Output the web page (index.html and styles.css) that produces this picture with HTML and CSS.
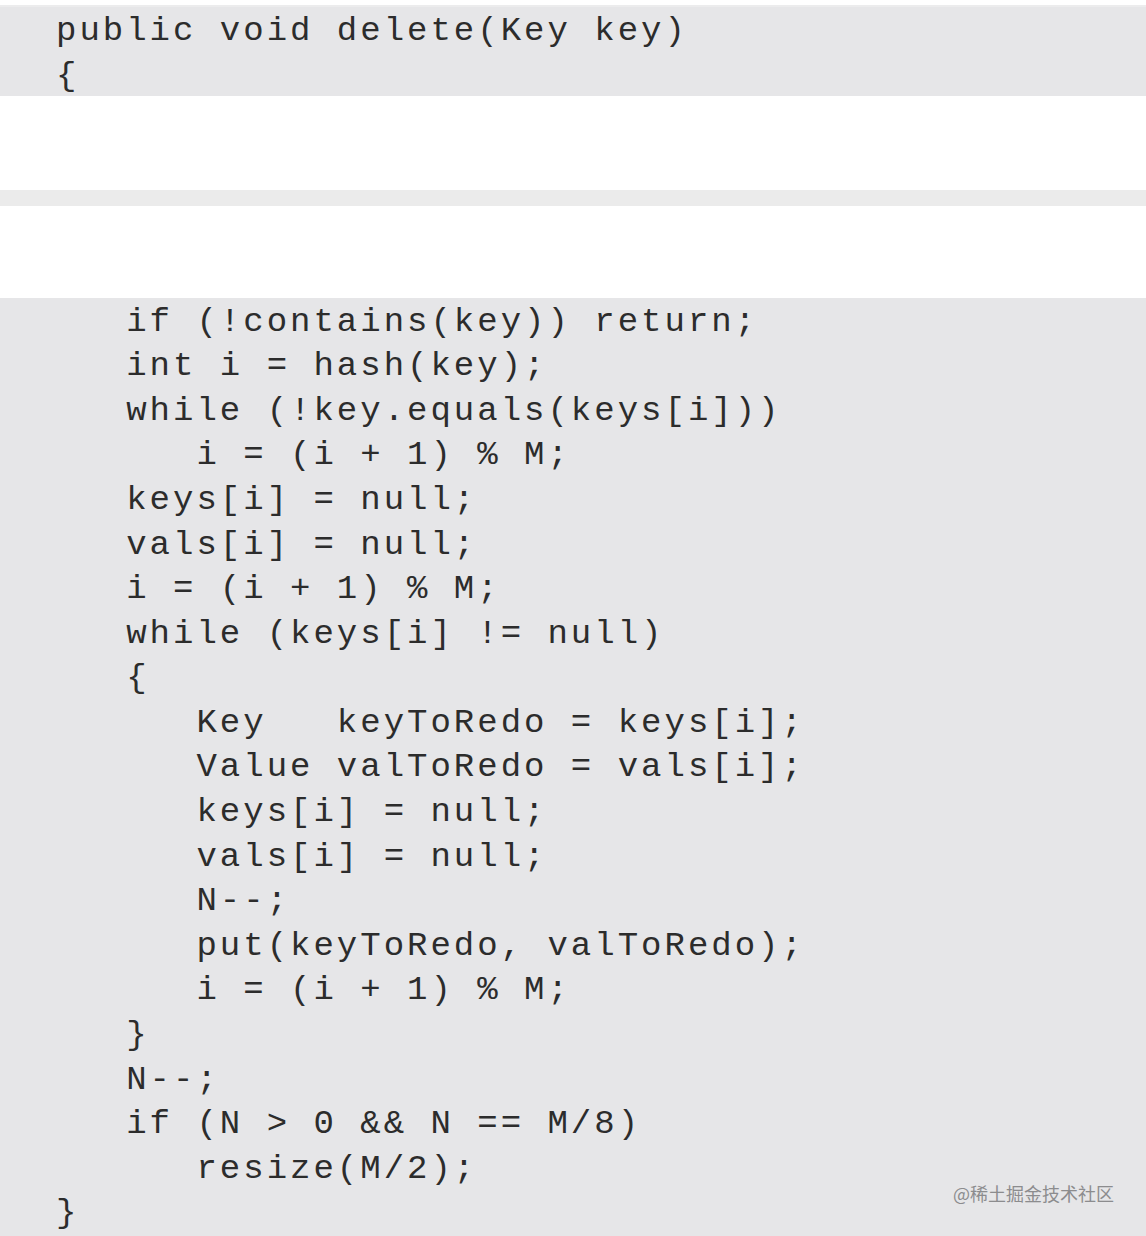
FILE: index.html
```html
<!DOCTYPE html>
<html lang="en">
<head>
<meta charset="utf-8">
<title>delete</title>
<link rel="stylesheet" href="styles.css">
</head>
<body>
<div class="page">
<pre class="code code-head">public void delete(Key key)
{</pre>
<div class="gap gap-a"></div>
<div class="strip"></div>
<div class="gap gap-b"></div>
<div class="body-wrap">
<pre class="code code-body">   if (!contains(key)) return;
   int i = hash(key);
   while (!key.equals(keys[i]))
      i = (i + 1) % M;
   keys[i] = null;
   vals[i] = null;
   i = (i + 1) % M;
   while (keys[i] != null)
   {
      Key   keyToRedo = keys[i];
      Value valToRedo = vals[i];
      keys[i] = null;
      vals[i] = null;
      N--;
      put(keyToRedo, valToRedo);
      i = (i + 1) % M;
   }
   N--;
   if (N &gt; 0 &amp;&amp; N == M/8)
      resize(M/2);
}</pre>
<span class="watermark">@稀土掘金技术社区</span>
</div>
</div>
</body>
</html>
```
FILE: styles.css
```css
html, body {
  margin: 0;
  padding: 0;
  background: #ffffff;
}

.page {
  width: 1146px;
  height: 1236px;
  overflow: hidden;
  display: flex;
  flex-direction: column;
}

.code {
  margin: 0;
  padding: 0 0 0 56px;
  font-family: "Courier New", "Nimbus Mono PS", "Nimbus Mono L", "FreeMono", "Liberation Mono", monospace;
  font-size: 34px;
  letter-spacing: 3px;
  line-height: 44.6px;
  color: #2c2c2c;
  background: #e6e6e8;
  white-space: pre;
}

.code-head {
  margin-top: 5px;
  height: 87px;
  padding-top: 2px;
  border-top: 2px solid #ececed;
  box-sizing: content-box;
}

.gap-a {
  height: 94px;
}

.strip {
  height: 16px;
  background: #ebebeb;
}

.gap-b {
  height: 92px;
}

.body-wrap {
  position: relative;
  flex: 1;
  background: #e6e6e8;
}

.code-body {
  padding-top: 2px;
}

.watermark {
  position: absolute;
  right: 32px;
  top: 884px;
  font-family: "Noto Sans CJK SC", "Noto Sans", sans-serif;
  font-size: 18px;
  line-height: 22px;
  color: #8c8c8e;
}
```
